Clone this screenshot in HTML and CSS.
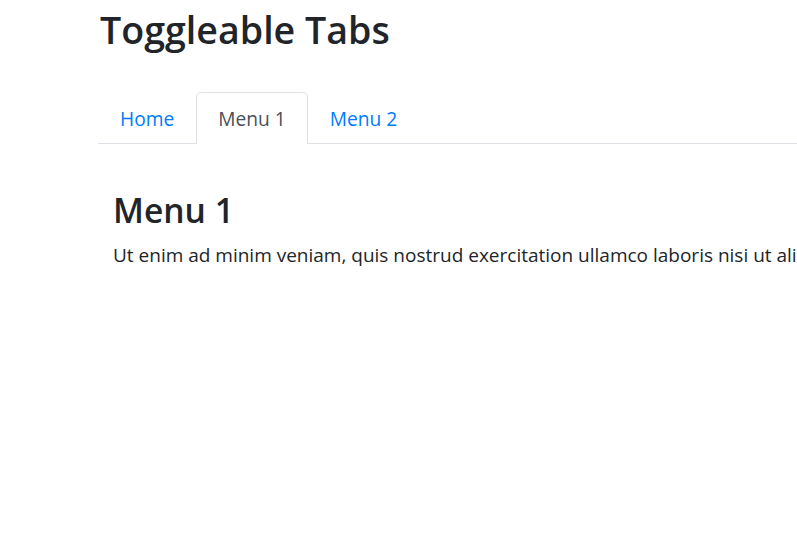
FILE: index.html
```html
<!DOCTYPE html>
<html>
<head>
<meta charset="utf-8">
<link rel="stylesheet" href="styles.css">
</head>
<body>
<div class="container">
  <h2 class="title">Toggleable Tabs</h2>
  <ul class="nav-tabs">
    <li><a class="nav-link" href="#">Home</a></li>
    <li><a class="nav-link active" href="#">Menu 1</a></li>
    <li><a class="nav-link" href="#">Menu 2</a></li>
  </ul>
  <div class="tab-pane">
    <h3 class="pane-title">Menu 1</h3>
    <p class="pane-text">Ut enim ad minim veniam, quis nostrud exercitation ullamco laboris nisi ut aliquip ex ea commodo consequat.</p>
  </div>
</div>
</body>
</html>
```

FILE: styles.css
```css
html, body {
  margin: 0;
  padding: 0;
  background: #fff;
  overflow: hidden;
}
body {
  font-family: "Open Sans", "Noto Sans", sans-serif;
  font-size: 19.2px;
  line-height: 1.5;
  color: #212529;
  width: 797px;
  height: 557px;
}
.container {
  padding-left: 98px;
  white-space: nowrap;
  overflow: hidden;
}
.title {
  margin: 0 0 0 2px;
  padding-top: 7px;
  font-size: 37.6px;
  font-weight: 600;
  line-height: 1.2;
}
.nav-tabs {
  list-style: none;
  margin: 40px 0 0 0;
  padding: 0;
  display: flex;
  border-bottom: 1px solid #dee2e6;
}
.nav-tabs li {
  margin-bottom: -1px;
}
.nav-link {
  display: block;
  padding: 11.5px 21px 9.5px 21px;
  color: #007bff;
  text-decoration: none;
  border: 1px solid transparent;
  border-top-left-radius: 5px;
  border-top-right-radius: 5px;
}
.nav-link.active {
  color: #495057;
  background: #fff;
  border-color: #dee2e6 #dee2e6 #fff;
}
.tab-pane {
  padding-left: 15px;
  padding-top: 46px;
}
.pane-title {
  margin: 0 0 11px 0;
  font-size: 33.6px;
  font-weight: 600;
  line-height: 1.2;
}
.pane-text {
  margin: 0;
  font-size: 19px;
}
```
